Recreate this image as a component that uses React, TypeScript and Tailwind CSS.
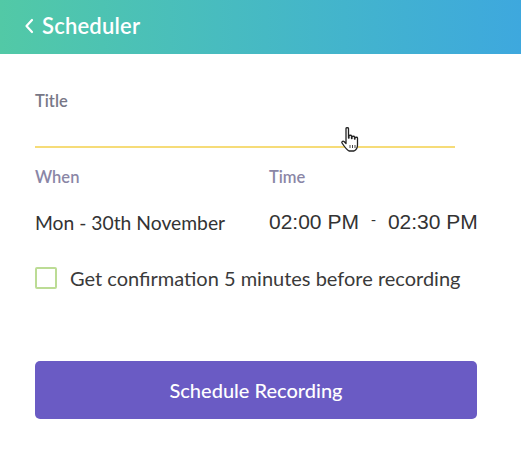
import React from "react";

export default function App() {
  return (
    <div
      className="w-[521px] h-[450px] bg-white overflow-hidden relative"
      style={{ fontFamily: "Lato, 'Open Sans', sans-serif" }}
    >
      <div className="h-[54px] bg-gradient-to-r from-[#52c9a6] to-[#3ea8de] flex items-center pl-[24px] gap-[8px] text-white">
        <svg width="10" height="16" viewBox="0 0 10 16" className="mt-[-2px]">
          <path d="M8 2 L2.5 8 L8 14" fill="none" stroke="white" strokeWidth="2.2" strokeLinecap="round" strokeLinejoin="round" />
        </svg>
        <span className="text-[22px] font-semibold tracking-[0.2px] mt-[-3px]">Scheduler</span>
      </div>

      <div className="px-[35px] pt-[35px]">
        <div className="w-[420px]">
          <div className="text-[16.5px] leading-[24px] font-semibold text-[#777786]">Title</div>
          <div className="h-[35px] border-b-2 border-[#f6dc78]" />
        </div>

        <div className="flex mt-[17px]">
          <div className="w-[234px]">
            <div className="text-[16.5px] leading-[24px] font-semibold text-[#8a86a6]">When</div>
            <div className="mt-[20px] text-[19.3px] text-[#333333]">Mon - 30th November</div>
          </div>
          <div>
            <div className="text-[16.5px] leading-[24px] font-semibold text-[#8a86a6]">Time</div>
            <div
              className="mt-[17px] text-[21px] text-[#333333] flex items-center gap-[12px]"
              style={{ fontFamily: "'Liberation Sans', Arial, sans-serif" }}
            >
              <span>02:00 PM</span>
              <span className="text-[15px] mt-[-4px]">-</span>
              <span>02:30 PM</span>
            </div>
          </div>
        </div>

        <div className="flex items-center gap-[13px] mt-[25px]">
          <div className="w-[22px] h-[22px] border-2 border-[#bcdc95] rounded-[2px] bg-white" />
          <span className="text-[20px] text-[#3a3a3a]">Get confirmation 5 minutes before recording</span>
        </div>

        <button className="mt-[68px] w-[442px] h-[58px] rounded-[5px] bg-[#6a5bc4] text-white text-[20px] font-medium flex items-center justify-center">
          Schedule Recording
        </button>
      </div>

      <svg
        className="absolute left-[339px] top-[126px]"
        width="24"
        height="28"
        viewBox="0 0 24 28"
      >
        <path
          d="M7 2.5 C7 1.5 9.5 1.5 9.5 2.5 L9.5 12 L10 12 L10 10 C10 9 12.5 9 12.5 10 L12.5 12.5 L13 12.5 L13 11 C13 10 15.5 10 15.5 11 L15.5 13 L16 13 L16 12 C16 11 18.5 11 18.5 12 L18.5 19 C18.5 22 17 24 15 25 L10 25 C8 24 5 20 3 17 C2.3 16 3.8 14.5 5 15.5 L7 17.5 Z"
          fill="white"
          stroke="#222"
          strokeWidth="1.3"
          strokeLinejoin="round"
        />
        <path d="M11 19 L11 22 M13.5 19 L13.5 22 M16 19 L16 22" stroke="#444" strokeWidth="1" />
      </svg>
    </div>
  );
}
